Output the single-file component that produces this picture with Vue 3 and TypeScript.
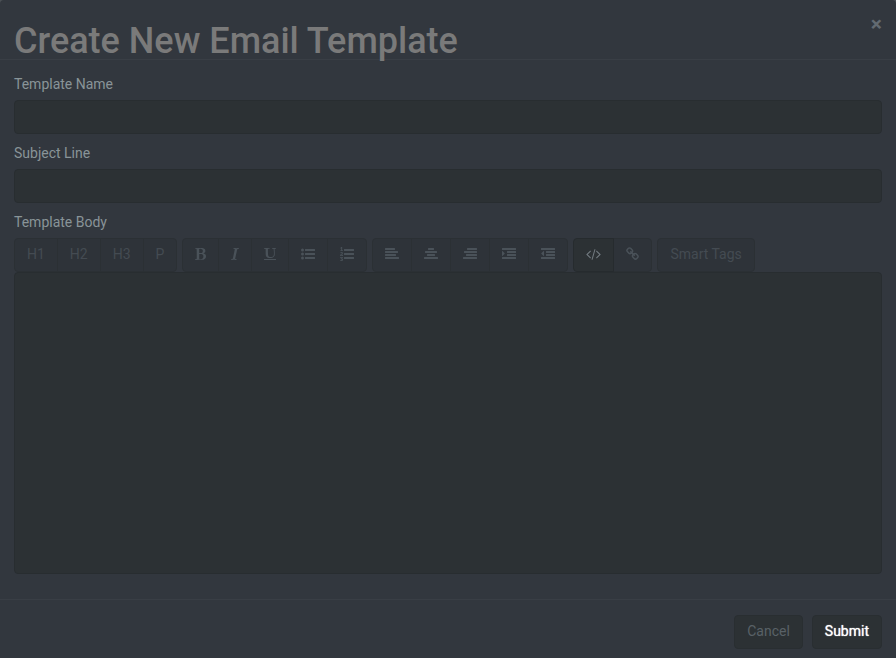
<script setup lang="ts">
import { ref } from 'vue'

interface Tool {
  label: string
  text?: string
  x?: number
  width?: number
  path?: string
  active?: boolean
}

// Rounded horizontal bar, 256 units tall
const bar = (x: number, y: number, w: number, r = 64): string =>
  `M${x + r} ${y}h${w - 2 * r}a${r} ${r} 0 0 1 ${r} ${r}v${256 - 2 * r}a${r} ${r} 0 0 1 ${-r} ${r}h${2 * r - w}a${r} ${r} 0 0 1 ${-r} ${-r}v${2 * r - 256}a${r} ${r} 0 0 1 ${r} ${-r}z`

const dot = (y: number): string => `M0 ${y}a192 192 0 0 1 384 0a192 192 0 0 1 -384 0z`

const listBars = bar(512, 256, 1280, 32) + bar(512, 768, 1280, 32) + bar(512, 1280, 1280, 32)
const indentBars =
  bar(0, 128, 1792, 32) + bar(640, 512, 1152, 32) + bar(640, 896, 1152, 32) + bar(0, 1280, 1792, 32)

const groups: Tool[][] = [
  [
    { label: 'Heading 1', text: 'H1' },
    { label: 'Heading 2', text: 'H2' },
    { label: 'Heading 3', text: 'H3' },
    { label: 'Paragraph', text: 'P' },
  ],
  [
    {
      label: 'Bold', x: 192, width: 1408,
      path: 'M747 1521q74 32 140 32 376 0 376-335 0-114-41-180-27-44-61.5-74t-67.5-46.5-80.5-25-84-10.5-94.5-2q-73 0-101 10 0 53-.5 159t-.5 158q0 8-1 67.5t-.5 96.5 4.5 83.5 12 66.5zm-14-746q42 7 109 7 82 0 143-13t110-44.5 74.5-89.5 25.5-142q0-70-29-122.5t-79-82-108-43.5-124-14q-50 0-130 13 0 50 4 151t4 152q0 27-.5 80t-.5 79q0 46 1 69zm-541 889l2-94q15-4 85-16t106-27q7-12 12.5-27t8.5-33.5 5.5-32.5 3-37.5.5-34v-65.5q0-982-22-1025-4-8-22-14.5t-44.5-11-49.5-7-48.5-4.5-30.5-3l-4-83q98-2 340-11.5t373-9.5q23 0 68 .5t68 .5q70 0 136.5 13t128.5 42 108 71 74 104.5 28 137.5q0 52-16.5 95.5t-39 72-64.5 57.5-73 45-84 40q154 35 256.5 134t102.5 248q0 100-35 179.5t-93.5 130.5-138 85.5-163.5 48.5-176 14q-44 0-132-3t-132-3q-106 0-307 11t-231 12z',
    },
    {
      label: 'Italic', x: 384, width: 1024,
      path: 'M384 1662l17-85q22-7 61.5-16.5t72-19 59.5-23.5q28-35 41-101 1-7 62-289t114-543.5 52-296.5v-25q-24-13-54.5-18.5t-69.5-8-58-5.5l19-103q33 2 120 6.5t149.5 7 120.5 2.5q48 0 98.5-2.5t121-7 98.5-6.5q-5 39-19 89-30 10-101.5 28.5t-108.5 33.5q-8 19-14 42.5t-9 40-7.5 45.5-6.5 42q-27 148-87.5 419.5t-77.5 355.5q-2 9-13 58t-20 90-16 83.5-6 57.5l1 18q17 4 185 31-3 44-16 99-11 0-32.5 1.5t-32.5 1.5q-29 0-87-10t-86-10q-138-2-206-2-51 0-143 9t-121 11z',
    },
    {
      label: 'Underline', x: 128, width: 1536,
      path: 'M176 223q-37-2-45-4l-3-88q13-1 40-1 60 0 112 4 132 7 166 7 86 0 168-3 116-4 146-5 56 0 86-2l-1 14 2 64v9q-60 9-124 9-60 0-79 25-13 14-13 132 0 13 .5 32.5t.5 25.5l1 229 14 280q6 124 51 202 35 59 96 92 88 47 177 47 104 0 191-28 56-18 99-51 48-36 65-64 36-56 53-114 21-73 21-229 0-79-3.5-128t-11-122.5-13.5-159.5l-4-59q-5-67-24-88-34-35-77-34l-100 2-14-3 2-86h84l205 10q76 3 196-10l18 2q6 38 6 51 0 7-4 31-45 12-84 13-73 11-79 17-15 15-15 41 0 7 1.5 27t1.5 31q8 19 22 396 6 195-15 304-15 76-41 122-38 65-112 123-75 57-182 89-109 33-255 33-167 0-284-46-119-47-179-122-61-76-83-195-16-80-16-237v-333q0-188-17-213-25-36-147-39zm1488 1409v-64q0-14-9-23t-23-9h-1472q-14 0-23 9t-9 23v64q0 14 9 23t23 9h1472q14 0 23-9t9-23z',
    },
    { label: 'Bulleted list', path: dot(384) + dot(896) + dot(1408) + listBars },
    {
      label: 'Numbered list',
      path: 'M381 1620q0 80-54.5 126t-135.5 46q-106 0-172-66l57-88q49 45 106 45 29 0 50.5-14.5t21.5-42.5q0-64-105-56l-26-56q8-10 32.5-43.5t42.5-54 37-38.5v-1q-16 0-48.5 1t-48.5 1v53h-106v-152h333v88l-95 115q51 12 81 49t30 88zm2-627v159h-362q-6-36-6-54 0-51 23.5-93t56.5-68 66-47.5 56.5-43.5 23.5-45q0-25-14.5-38.5t-39.5-13.5q-46 0-81 58l-85-59q24-51 71.5-79.5t105.5-28.5q73 0 123 41.5t50 112.5q0 50-34 91.5t-75 64.5-75.5 50.5-35.5 52.5h127v-60h105zm1-580v99h-335v-99h107q0-41 .5-121.5t.5-121.5v-12h-2q-8 17-50 54l-71-76 136-127h106v404h108z' + listBars,
    },
  ],
  [
    { label: 'Align left', path: bar(0, 128, 1280) + bar(0, 512, 1664) + bar(0, 896, 1408) + bar(0, 1280, 1792) },
    { label: 'Align center', path: bar(512, 128, 768) + bar(128, 512, 1536) + bar(384, 896, 1024) + bar(0, 1280, 1792) },
    { label: 'Align right', path: bar(512, 128, 1280) + bar(128, 512, 1664) + bar(384, 896, 1408) + bar(0, 1280, 1792) },
    {
      label: 'Indent',
      path: 'M352 832q0 14-9 23l-288 288q-9 9-23 9-13 0-22.5-9.5t-9.5-22.5v-576q0-13 9.5-22.5t22.5-9.5q14 0 23 9l288 288q9 9 9 23z' + indentBars,
    },
    {
      label: 'Outdent',
      path: 'M384 544v576q0 13-9.5 22.5t-22.5 9.5q-14 0-23-9l-288-288q-9-9-9-23t9-23l288-288q9-9 23-9 13 0 22.5 9.5t9.5 22.5z' + indentBars,
    },
  ],
  [
    {
      label: 'HTML source', x: -64, width: 1920, active: true,
      path: 'M553 1399l-50 50q-10 10-23 10t-23-10l-466-466q-10-10-10-23t10-23l466-466q10-10 23-10t23 10l50 50q10 10 10 23t-10 23l-393 393 393 393q10 10 10 23t-10 23zm591-1067l-373 1291q-4 13-15.5 19.5t-23.5 2.5l-62-17q-13-4-19.5-15.5t-2.5-24.5l373-1291q4-13 15.5-19.5t23.5-2.5l62 17q13 4 19.5 15.5t2.5 24.5zm657 651l-466 466q-10 10-23 10t-23-10l-50-50q-10-10-10-23t10-23l393-393-393-393q-10-10-10-23t10-23l50-50q10-10 23-10t23 10l466 466q10 10 10 23t-10 23z',
    },
    {
      label: 'Insert link', x: 64, width: 1664,
      path: 'M1520 1216q0-40-28-68l-208-208q-28-28-68-28-42 0-72 32 3 3 19 18.5t21.5 21.5 15 19 13 25.5 3.5 27.5q0 40-28 68t-68 28q-15 0-27.5-3.5t-25.5-13-19-15-21.5-21.5-18.5-19q-33 31-33 73 0 40 28 68l206 207q27 27 68 27 40 0 68-26l147-146q28-28 28-67zm-703-705q0-40-28-68l-206-207q-28-28-68-28-39 0-68 27l-147 146q-28 28-28 67 0 40 28 68l208 208q27 27 68 27 42 0 72-31-3-3-19-18.5t-21.5-21.5-15-19-13-25.5-3.5-27.5q0-40 28-68t68-28q15 0 27.5 3.5t25.5 13 19 15 21.5 21.5 18.5 19q33-31 33-73zm895 705q0 120-85 203l-147 146q-83 83-203 83-121 0-204-85l-206-207q-83-83-83-203 0-123 88-209l-88-88q-86 88-208 88-120 0-204-84l-208-208q-84-84-84-204t85-203l147-146q83-83 203-83 121 0 204 85l206 207q83 83 83 203 0 123-88 209l88 88q86-88 208-88 120 0 204 84l208 208q84 84 84 204z',
    },
  ],
  [{ label: 'Smart Tags', text: 'Smart Tags' }],
]

const name = ref('')
const subject = ref('')
const body = ref('')
</script>

<template>
  <form class="modal" @submit.prevent>
    <header class="modal-header">
      <h1>Create New Email Template</h1>
      <button type="button" class="close" aria-label="Close">×</button>
    </header>

    <main class="modal-body">
      <label for="template-name">Template Name</label>
      <input id="template-name" v-model="name" class="control" type="text" />

      <label for="subject-line">Subject Line</label>
      <input id="subject-line" v-model="subject" class="control" type="text" />

      <label for="template-body">Template Body</label>
      <div class="toolbar" role="toolbar" aria-label="Formatting">
        <div v-for="(group, g) in groups" :key="g" class="group">
          <button
            v-for="tool in group"
            :key="tool.label"
            type="button"
            class="tool"
            :class="{ active: tool.active }"
            :aria-label="tool.label"
          >
            <template v-if="tool.text">{{ tool.text }}</template>
            <svg
              v-else
              :width="(tool.width ?? 1792) / 128"
              height="14"
              :viewBox="`${tool.x ?? 0} 0 ${tool.width ?? 1792} 1792`"
              aria-hidden="true"
            >
              <path :d="tool.path" />
            </svg>
          </button>
        </div>
      </div>
      <textarea id="template-body" v-model="body" class="control editor"></textarea>
    </main>

    <footer class="modal-footer">
      <button type="button" class="btn">Cancel</button>
      <button type="submit" class="btn submit">Submit</button>
    </footer>
  </form>
</template>

<style>
body {
  margin: 0;
  background: #4b5055;
}
</style>

<style scoped>
.modal {
  display: flex;
  flex-direction: column;
  box-sizing: border-box;
  min-height: 100vh;
  border-radius: 4px 4px 0 0;
  background: #32373e;
  color: #899498;
  font: 14px/20px Roboto, sans-serif;
}

.modal-header {
  display: flex;
  align-items: flex-start;
  justify-content: space-between;
  padding: 0 14px;
  border-bottom: 1px solid #393e45;
}

h1 {
  margin: 0;
  padding-top: 23px;
  color: #7a7a7a;
  font-size: 36px;
  font-weight: 500;
  line-height: 36px;
}

.close {
  margin: 14px 0 0;
  padding: 0;
  border: 0;
  background: none;
  color: #626a71;
  font: 700 21px/20px Roboto, sans-serif;
}

.modal-body {
  display: flex;
  flex: 1;
  flex-direction: column;
  padding: 14px 14px 25px;
}

label {
  align-self: flex-start;
  margin-bottom: 6px;
}

.control {
  box-sizing: border-box;
  width: 100%;
  height: 34px;
  margin: 0 0 9px;
  padding: 6px 12px;
  border: 1px solid #282d30;
  border-radius: 4px;
  outline: none;
  background: #2c3134;
  color: #c8c8c8;
  font: inherit;
}

.editor {
  flex: 1;
  min-height: 200px;
  margin: 0;
  resize: none;
}

.toolbar {
  display: flex;
  flex-wrap: wrap;
  gap: 5px;
}

.group {
  display: flex;
}

.tool,
.btn {
  box-sizing: border-box;
  height: 34px;
  padding: 5px 12px 7px;
  border: 1px solid #2b3034;
  background: #2e3339;
  color: #444b52;
  font: inherit;
  white-space: nowrap;
}

.tool + .tool {
  margin-left: -1px;
}

.tool:first-child {
  border-top-left-radius: 4px;
  border-bottom-left-radius: 4px;
}

.tool:last-child {
  border-top-right-radius: 4px;
  border-bottom-right-radius: 4px;
}

.tool svg {
  fill: #4a5259;
  vertical-align: -2px;
}

.tool.active {
  z-index: 1;
  border-color: #262b2e;
  background: #2c3134;
}

.tool.active svg {
  fill: #737b81;
}

.modal-footer {
  display: flex;
  justify-content: flex-end;
  gap: 9px;
  padding: 15px 14px 9px;
  border-top: 1px solid #393e45;
}

.btn {
  border-color: #292e31;
  border-radius: 4px;
  background: #2c3134;
  color: #596167;
}

.btn.submit {
  color: #fff;
  text-shadow: 0 0 1px #fff;
}
</style>
